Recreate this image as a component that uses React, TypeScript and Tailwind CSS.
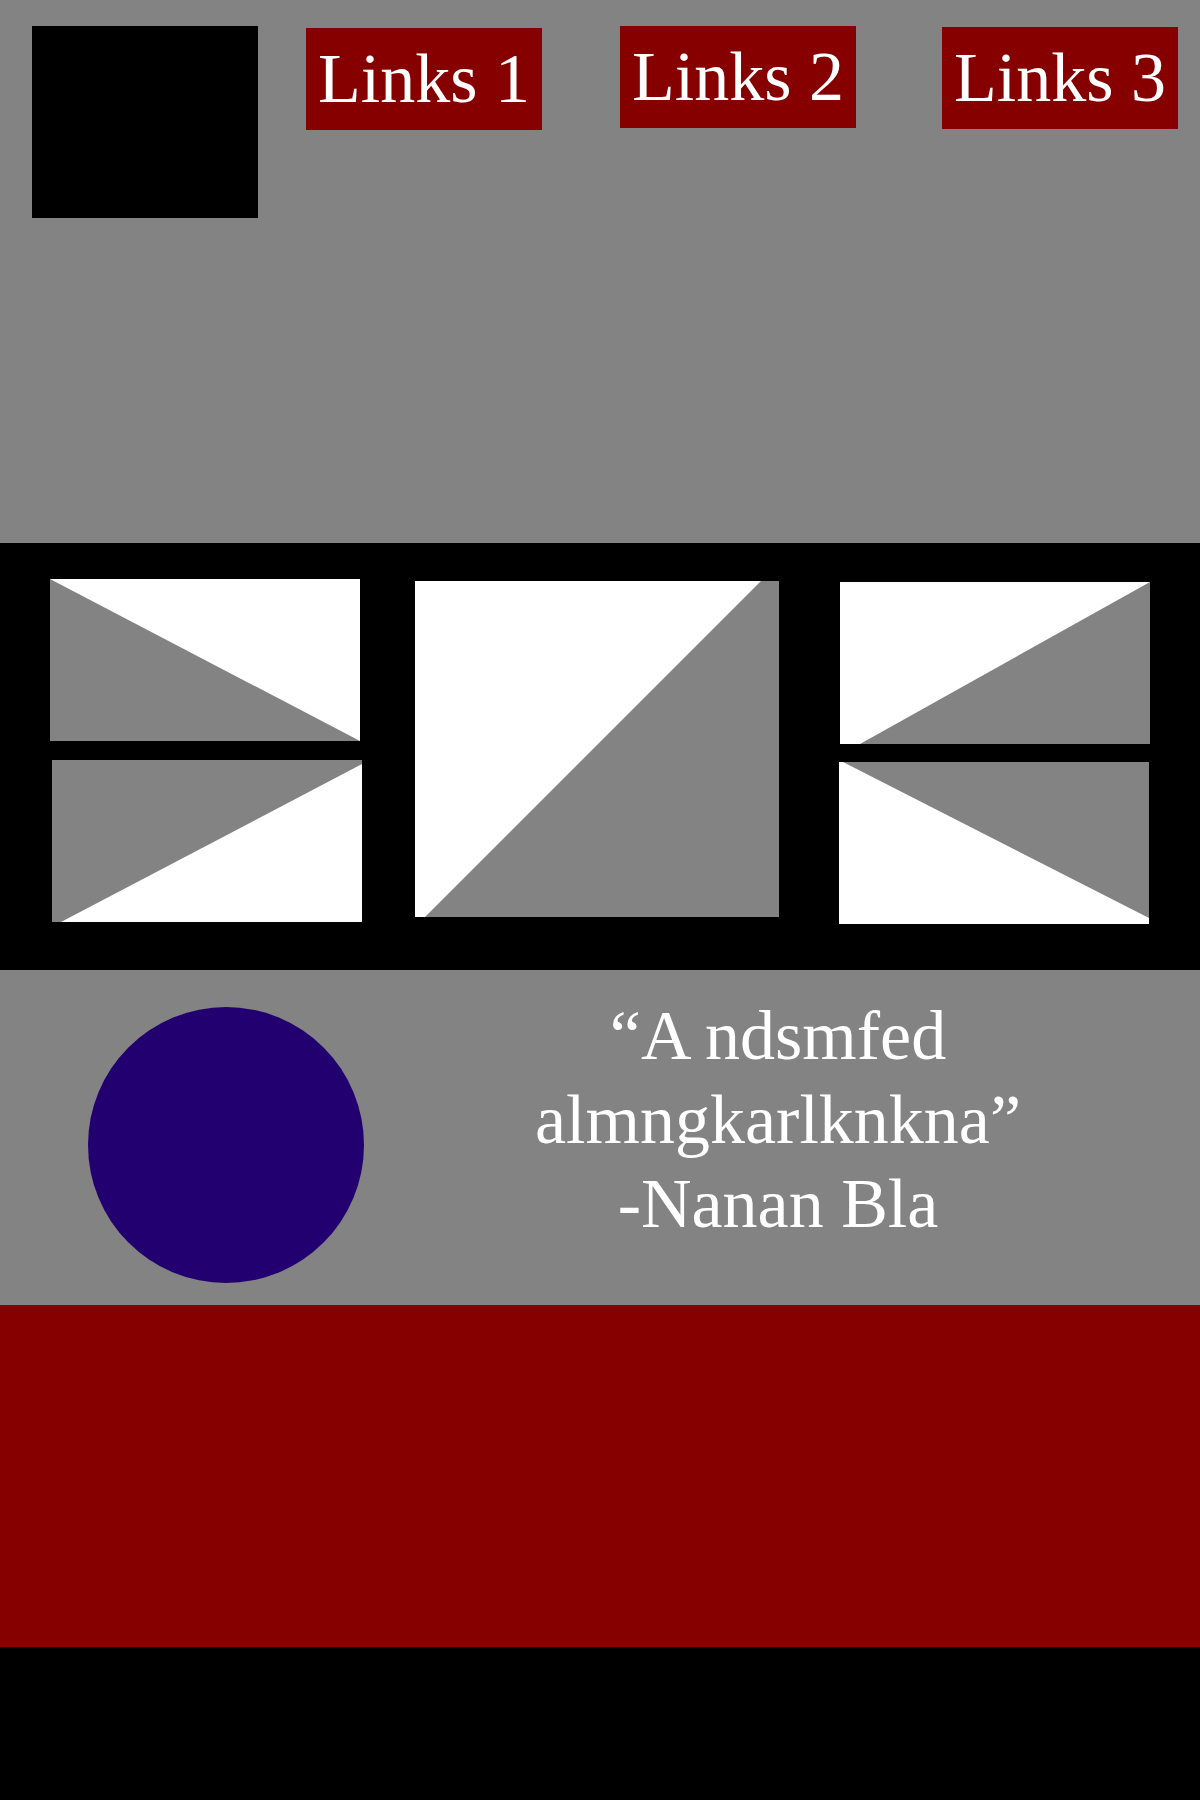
import React from "react";

const serif = "font-['Liberation_Serif','Times_New_Roman',serif]";

type Pt = [number, number];

function Placeholder({ w, h, gray, className = "" }: { w: number; h: number; gray: Pt[]; className?: string }) {
  return (
    <svg
      width={w}
      height={h}
      viewBox={`0 0 ${w} ${h}`}
      preserveAspectRatio="none"
      className={`block bg-white ${className}`}
    >
      <polygon points={gray.map((p) => p.join(",")).join(" ")} fill="#838383" />
    </svg>
  );
}

function NavLink({ label, className = "" }: { label: string; className?: string }) {
  return (
    <a
      href="#"
      className={`block h-[102px] w-[236px] bg-[#860000] text-center text-[70px] leading-[102px] text-white ${className}`}
    >
      {label}
    </a>
  );
}

export default function App() {
  return (
    <div className={`w-[1200px] ${serif}`}>
      {/* header */}
      <header className="flex h-[543px] items-start bg-[#838383] pl-[32px] pt-[26px]">
        <div className="h-[192px] w-[226px] bg-black" />
        <nav className="flex items-start">
          <NavLink label="Links 1" className="ml-[48px] mt-[2px]" />
          <NavLink label="Links 2" className="ml-[78px]" />
          <NavLink label="Links 3" className="ml-[86px] mt-[1px]" />
        </nav>
      </header>

      {/* gallery */}
      <section className="flex h-[427px] items-start bg-black pl-[50px]">
        <div className="mt-[36px] flex w-[312px] flex-col gap-[19px]">
          <Placeholder w={310} h={162} gray={[[0, 0], [310, 162], [0, 162]]} />
          <Placeholder w={310} h={162} gray={[[0, 0], [310, 0], [310, 4], [9, 162], [0, 162]]} className="ml-[2px]" />
        </div>
        <div className="ml-[53px] mt-[38px]">
          <Placeholder w={364} h={336} gray={[[346, 0], [364, 0], [364, 336], [10, 336]]} />
        </div>
        <div className="ml-[60px] mt-[39px] flex flex-col gap-[18px]">
          <Placeholder w={310} h={162} gray={[[310, 0], [310, 162], [20, 162]]} className="ml-[1px]" />
          <Placeholder w={310} h={162} gray={[[4, 0], [310, 0], [310, 156]]} />
        </div>
      </section>

      {/* quote */}
      <section className="flex h-[335px] items-start bg-[#838383]">
        <div className="ml-[88px] mt-[37px] h-[276px] w-[276px] shrink-0 rounded-full bg-[#230070]" />
        <blockquote className="mt-[24px] flex-1 pr-[8px] text-center text-[70px] leading-[84px] text-white">
          “A ndsmfed
          <br />
          almngkarlknkna”
          <br />
          -Nanan Bla
        </blockquote>
      </section>

      <section className="h-[342px] bg-[#860000]" />
      <footer className="h-[153px] bg-black" />
    </div>
  );
}
